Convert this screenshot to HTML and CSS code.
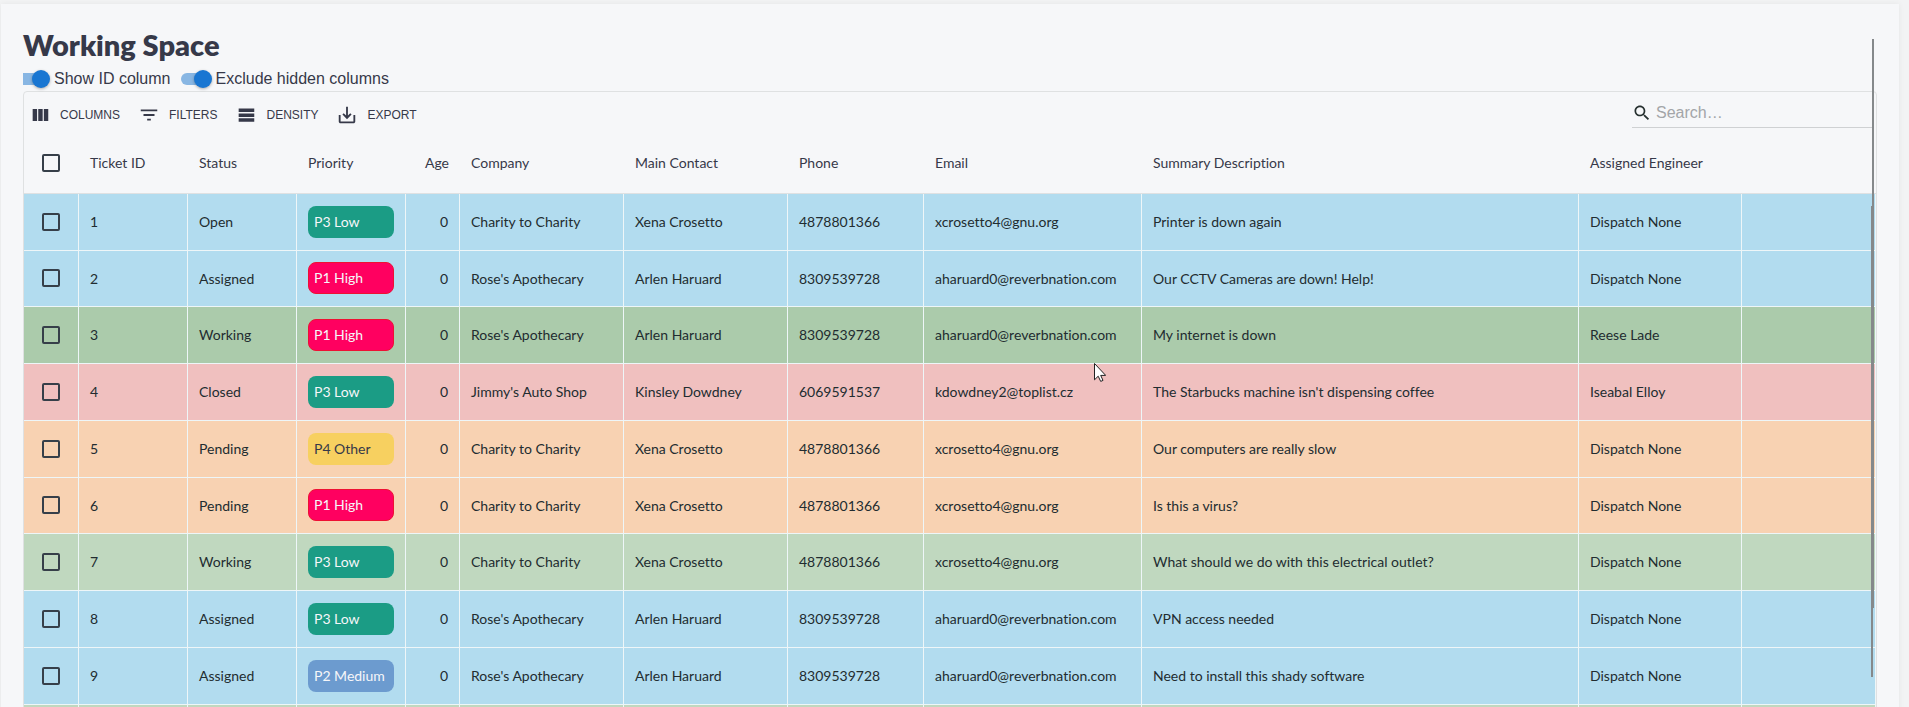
FILE: index.html
```html
<!DOCTYPE html>
<html lang="en">
<head>
<meta charset="utf-8">
<title>Working Space</title>
<link rel="stylesheet" href="styles.css">
</head>
<body>
<main class="card">
  <h1 class="title">Working Space</h1>
  <div class="switches">
    <label class="switch-label first"><input class="switch" type="checkbox" role="switch" checked>Show ID column</label>
    <label class="switch-label"><input class="switch" type="checkbox" role="switch" checked>Exclude hidden columns</label>
  </div>
  <section class="grid">
    <div class="toolbar">
      <button class="tool" type="button"><svg class="tool-icon" viewBox="0 0 24 24"><path d="M4 5.500h4.800v13H4zM10.100 5.500h4.800v13H10.100zM16.200 5.500h4.800v13h-4.800z"/></svg>COLUMNS</button>
      <button class="tool" type="button"><svg class="tool-icon" viewBox="0 0 24 24"><path d="M10 18h4v-2h-4v2zM3 6v2h18V6H3zm3 7h12v-2H6v2z"/></svg>FILTERS</button>
      <button class="tool" type="button"><svg class="tool-icon" viewBox="0 0 24 24"><path d="M4 5h17v3.800H4zM4 10.300h17v3.800H4zM4 15.600h17v3.800H4z"/></svg>DENSITY</button>
      <button class="tool" type="button"><svg class="tool-icon" viewBox="0 0 24 24"><path d="M19 12v7H5v-7H3v7c0 1.100.9 2 2 2h14c1.100 0 2-.9 2-2v-7h-2zm-6 .67l2.590-2.580L17 11.500l-5 5-5-5 1.410-1.410L11 12.670V3h2z"/></svg>EXPORT</button>
      <label class="search"><svg class="search-icon" viewBox="0 0 24 24"><path d="M15.500 14h-.79l-.28-.27C15.410 12.590 16 11.110 16 9.500 16 5.910 13.090 3 9.500 3S3 5.910 3 9.500 5.910 16 9.500 16c1.610 0 3.090-.59 4.230-1.570l.27.28v.79l5 4.990L20.490 19l-4.990-5zm-6 0C7.010 14 5 11.990 5 9.500S7.010 5 9.500 5 14 7.010 14 9.500 11.990 14 9.500 14z"/></svg><input class="search-input" type="search" placeholder="Search…" aria-label="Search"></label>
    </div>
    <table class="tickets">
      <colgroup><col class="c-check"><col class="c-small"><col class="c-small"><col class="c-small"><col class="c-age"><col class="c-name"><col class="c-name"><col class="c-phone"><col class="c-email"><col class="c-summary"><col class="c-engineer"><col></colgroup>
      <thead>
        <tr><th class="check"><input class="box" type="checkbox" aria-label="Select all rows"></th><th>Ticket ID</th><th>Status</th><th>Priority</th><th class="num">Age</th><th>Company</th><th>Main Contact</th><th>Phone</th><th>Email</th><th>Summary Description</th><th>Assigned Engineer</th><th></th></tr>
      </thead>
      <tbody>
        <tr class="blue"><td class="check"><input class="box" type="checkbox" aria-label="Select ticket 1"></td><td>1</td><td>Open</td><td><span class="chip low">P3 Low</span></td><td class="num">0</td><td>Charity to Charity</td><td>Xena Crosetto</td><td>4878801366</td><td>xcrosetto4@gnu.org</td><td>Printer is down again</td><td>Dispatch None</td><td></td></tr>
        <tr class="blue"><td class="check"><input class="box" type="checkbox" aria-label="Select ticket 2"></td><td>2</td><td>Assigned</td><td><span class="chip high">P1 High</span></td><td class="num">0</td><td>Rose's Apothecary</td><td>Arlen Haruard</td><td>8309539728</td><td>aharuard0@reverbnation.com</td><td>Our CCTV Cameras are down! Help!</td><td>Dispatch None</td><td></td></tr>
        <tr class="green hovered"><td class="check"><input class="box" type="checkbox" aria-label="Select ticket 3"></td><td>3</td><td>Working</td><td><span class="chip high">P1 High</span></td><td class="num">0</td><td>Rose's Apothecary</td><td>Arlen Haruard</td><td>8309539728</td><td>aharuard0@reverbnation.com</td><td>My internet is down</td><td>Reese Lade</td><td></td></tr>
        <tr class="red"><td class="check"><input class="box" type="checkbox" aria-label="Select ticket 4"></td><td>4</td><td>Closed</td><td><span class="chip low">P3 Low</span></td><td class="num">0</td><td>Jimmy's Auto Shop</td><td>Kinsley Dowdney</td><td>6069591537</td><td>kdowdney2@toplist.cz</td><td>The Starbucks machine isn't dispensing coffee</td><td>Iseabal Elloy</td><td></td></tr>
        <tr class="orange"><td class="check"><input class="box" type="checkbox" aria-label="Select ticket 5"></td><td>5</td><td>Pending</td><td><span class="chip other">P4 Other</span></td><td class="num">0</td><td>Charity to Charity</td><td>Xena Crosetto</td><td>4878801366</td><td>xcrosetto4@gnu.org</td><td>Our computers are really slow</td><td>Dispatch None</td><td></td></tr>
        <tr class="orange"><td class="check"><input class="box" type="checkbox" aria-label="Select ticket 6"></td><td>6</td><td>Pending</td><td><span class="chip high">P1 High</span></td><td class="num">0</td><td>Charity to Charity</td><td>Xena Crosetto</td><td>4878801366</td><td>xcrosetto4@gnu.org</td><td>Is this a virus?</td><td>Dispatch None</td><td></td></tr>
        <tr class="green"><td class="check"><input class="box" type="checkbox" aria-label="Select ticket 7"></td><td>7</td><td>Working</td><td><span class="chip low">P3 Low</span></td><td class="num">0</td><td>Charity to Charity</td><td>Xena Crosetto</td><td>4878801366</td><td>xcrosetto4@gnu.org</td><td>What should we do with this electrical outlet?</td><td>Dispatch None</td><td></td></tr>
        <tr class="blue"><td class="check"><input class="box" type="checkbox" aria-label="Select ticket 8"></td><td>8</td><td>Assigned</td><td><span class="chip low">P3 Low</span></td><td class="num">0</td><td>Rose's Apothecary</td><td>Arlen Haruard</td><td>8309539728</td><td>aharuard0@reverbnation.com</td><td>VPN access needed</td><td>Dispatch None</td><td></td></tr>
        <tr class="blue"><td class="check"><input class="box" type="checkbox" aria-label="Select ticket 9"></td><td>9</td><td>Assigned</td><td><span class="chip medium">P2 Medium</span></td><td class="num">0</td><td>Rose's Apothecary</td><td>Arlen Haruard</td><td>8309539728</td><td>aharuard0@reverbnation.com</td><td>Need to install this shady software</td><td>Dispatch None</td><td></td></tr>
        <tr class="green"><td></td><td></td><td></td><td></td><td></td><td></td><td></td><td></td><td></td><td></td><td></td><td></td></tr>
      </tbody>
    </table>
  </section>
  <div class="thumb page-thumb"></div>
  <div class="thumb grid-thumb"></div>
  <svg class="cursor" viewBox="0 0 12 19"><path d="M.5.5v16.300l3.700-3.600 2.500 5.200 2.300-1-2.300-5h5z"/></svg>
</main>
</body>
</html>
```
FILE: styles.css
```css
* { box-sizing: border-box; }

body {
  margin: 0;
  height: 100vh;
  padding: 4px 10px 0 1px;
  overflow: hidden;
  background: #f2f3f4;
  color: #363949;
  font-family: Lato, "Open Sans", sans-serif;
  font-size: 14px;
  font-variant-ligatures: none;
}

.card {
  position: relative;
  padding: 23px 22px;
  background: #f6f7f9;
  box-shadow: 0 0 6px rgba(0, 0, 0, 0.06);
}

.title {
  margin: 0;
  font-size: 29px;
  font-weight: 800;
  line-height: 36px;
}

.switches {
  display: flex;
  gap: 10px;
  height: 28px;
  padding-top: 4px;
  align-items: center;
  font-family: "Liberation Sans", sans-serif;
  font-size: 16px;
}

.switch-label {
  display: flex;
  align-items: center;
  gap: 5px;
}

.switch {
  appearance: none;
  position: relative;
  width: 30px;
  height: 12px;
  margin: 0;
  border-radius: 6px;
  background: linear-gradient(90deg, #88b6e3 24px, transparent 24px);
}

.first .switch {
  width: 26px;
  border-radius: 0;
  background: linear-gradient(90deg, #88b6e3 20px, transparent 20px);
}

.switch::after {
  content: "";
  position: absolute;
  right: -1px;
  top: -3px;
  width: 18px;
  height: 18px;
  border-radius: 50%;
  background: #1976d2;
  box-shadow: 0 1px 3px rgba(0, 0, 0, 0.3);
}

.grid {
  border: 1px solid #dfe1e2;
  border-radius: 4px;
}

.toolbar {
  display: flex;
  align-items: center;
  height: 51px;
  padding: 0 2px 6px 5px;
  gap: 18px;
}

.tool {
  display: flex;
  align-items: center;
  gap: 9px;
  padding: 0;
  border: 0;
  background: none;
  color: #363949;
  font-family: "Liberation Sans", sans-serif;
  font-size: 12px;
}

.tool-icon {
  width: 22px;
  height: 22px;
  fill: currentColor;
}

.search {
  display: flex;
  align-self: flex-start;
  align-items: center;
  gap: 4px;
  width: 242px;
  height: 36px;
  padding-top: 6px;
  margin-left: auto;
  border-bottom: 1px solid #cfd1d3;
}

.search-icon {
  width: 20px;
  height: 20px;
  fill: #26302f;
}

.search-input {
  flex: 1;
  min-width: 0;
  padding: 0;
  border: 0;
  outline: 0;
  background: none;
  font-family: "Liberation Sans", sans-serif;
  font-size: 16px;
}

.search-input::placeholder { color: #a3a5a8; }

.tickets {
  width: 100%;
  table-layout: fixed;
  border-collapse: separate;
  border-spacing: 0;
}

.c-check { width: 55px; }
.c-small { width: 109px; }
.c-age { width: 54px; }
.c-name { width: 164px; }
.c-phone { width: 136px; }
.c-email { width: 218px; }
.c-summary { width: 437px; }
.c-engineer { width: 163px; }

th {
  height: 51px;
  padding: 0 11px 11px;
  border-bottom: 1px solid #dfe1e2;
  font-weight: 400;
  text-align: left;
}

td {
  height: 57px;
  padding: 0 11px 1px;
  border-right: 1px solid #eef6f8;
  border-bottom: 1px solid #eef6f8;
  color: #222c30;
  white-space: nowrap;
}

tbody tr:nth-child(4n + 2) td { height: 56px; }

.num { text-align: right; }

.check {
  padding-left: 0;
  padding-right: 1px;
  text-align: center;
}

.box {
  appearance: none;
  display: block;
  width: 18px;
  height: 18px;
  margin: 0 auto;
  border: 2px solid #363f49;
  border-radius: 2px;
}

.blue { background: #b2dcef; }
.green { background: #c0d8bf; }
.green.hovered { background: #abcbab; }
.red { background: #f0c0bf; }
.orange { background: #f8d2b2; }

.chip {
  display: block;
  height: 32px;
  padding: 0 6px;
  border-radius: 8px;
  color: #f6f6f9;
  line-height: 32px;
}

.low { background: #1b9c85; }
.high { background: #ff0060; border: 1px solid #ee1133; padding: 0 5px; line-height: 30px; }
.other { background: #f7d060; color: #363949; }
.medium { background: #6c9bcf; }

.thumb {
  position: absolute;
  width: 2px;
  background: #85898b;
}

.page-thumb { right: 25px; top: 35px; height: 569px; }
.grid-thumb { right: 26px; top: 202px; height: 471px; }

.cursor {
  position: absolute;
  left: 1093px;
  top: 359px;
  width: 12px;
  height: 19px;
  fill: #fff;
  stroke: #222;
}
```
